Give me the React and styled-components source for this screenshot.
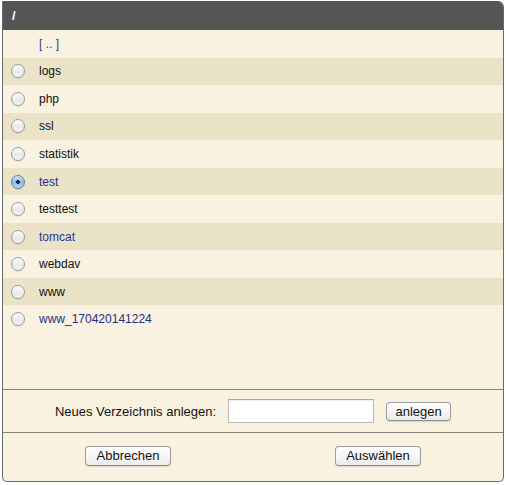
import React from "react";
import styled, { createGlobalStyle } from "styled-components";

const Global = createGlobalStyle`
  html, body { margin: 0; padding: 0; background: #ffffff; }
  body { font-family: "Liberation Sans", Arial, sans-serif; }
`;

const Page = styled.div`
  padding: 1px 0 0 2px;
`;

const Dialog = styled.div`
  box-sizing: border-box;
  width: 502px;
  height: 481px;
  display: flex;
  flex-direction: column;
  background: #f9f2e0;
  border: 1px solid #6a6a6a;
  border-top: none;
  border-radius: 1px 6px 5px 5px;
  overflow: hidden;
`;

const Header = styled.div`
  height: 29px;
  flex: none;
  background: #555555;
  color: #ffffff;
  font-weight: bold;
  font-size: 13px;
  display: flex;
  align-items: center;
  padding-left: 10px;
  margin: 0 -1px;
`;

const List = styled.div`
  flex: 1;
  display: flex;
  flex-direction: column;
`;

const Row = styled.div`
  height: 27.55px;
  flex: none;
  display: flex;
  align-items: center;
  background: ${(p) => (p.$odd ? "#ebe3c7" : "#f9f2e0")};
  font-size: 12px;
  color: ${(p) => p.$color || "#111111"};
`;

const RadioSlot = styled.div`
  width: 36px;
  flex: none;
  display: flex;
  align-items: center;
  padding-left: 8px;
  box-sizing: border-box;
`;

const Radio = styled.span`
  box-sizing: border-box;
  width: 14px;
  height: 14px;
  border-radius: 50%;
  border: 1px solid ${(p) => (p.$checked ? "#5e7fa8" : "#9b9b9b")};
  background: ${(p) =>
    p.$checked
      ? "radial-gradient(circle at 50% 50%, #1c2b3f 0, #1c2b3f 1.6px, transparent 2.2px), linear-gradient(#cfe3f7, #8fb9e6 55%, #b9d8f5)"
      : "linear-gradient(#fdfdfd, #e9e9e9 60%, #f4f4f4)"};
  box-shadow: 0 1px 1px rgba(0, 0, 0, 0.08);
`;

const Name = styled.span``;

const CreateBar = styled.div`
  flex: none;
  height: 43px;
  box-sizing: border-box;
  border-top: 1px solid #8a8478;
  display: flex;
  align-items: center;
  justify-content: center;
  gap: 12px;
`;

const Label = styled.span`
  font-size: 13px;
  color: #111111;
`;

const TextInput = styled.input`
  box-sizing: border-box;
  width: 146px;
  height: 24px;
  border: 1px solid #b9b9b9;
  border-top-color: #a8a8a8;
  background: #ffffff;
  box-shadow: inset 0 1px 1px rgba(0, 0, 0, 0.08);
  margin: 0;
  padding: 2px 4px;
  font-size: 13px;
  font-family: "Liberation Sans", Arial, sans-serif;
  outline: none;
`;

const Button = styled.button`
  box-sizing: border-box;
  height: ${(p) => p.$h}px;
  width: ${(p) => p.$w}px;
  padding: 0;
  margin: 0;
  border: 1px solid #9d9d9d;
  border-bottom-color: #8c8c8c;
  border-radius: 4px;
  background: linear-gradient(#ffffff, #f6f6f6 50%, #ececec);
  box-shadow: 0 1px 1px rgba(0, 0, 0, 0.12);
  font-size: 13px;
  font-family: "Liberation Sans", Arial, sans-serif;
  color: #111111;
  line-height: 1;
`;

const ActionBar = styled.div`
  flex: none;
  height: 49px;
  box-sizing: border-box;
  border-top: 1px solid #8a8478;
  display: grid;
  grid-template-columns: 1fr 1fr;
  align-items: center;
  padding-bottom: 3px;
`;

const Cell = styled.div`
  display: flex;
  justify-content: center;
`;

const entries = [
  { name: "[ .. ]", color: "#4a2c93", parent: true },
  { name: "logs" },
  { name: "php" },
  { name: "ssl" },
  { name: "statistik" },
  { name: "test", color: "#2b2b8e", checked: true },
  { name: "testtest" },
  { name: "tomcat", color: "#1f3a94" },
  { name: "webdav" },
  { name: "www" },
  { name: "www_170420141224", color: "#1b2f85" },
];

export default function App() {
  return (
    <>
      <Global />
      <Page>
        <Dialog>
          <Header>/</Header>
          <List>
            {entries.map((e, i) => (
              <Row key={e.name} $odd={i % 2 === 1} $color={e.color}>
                <RadioSlot>{!e.parent && <Radio $checked={e.checked} />}</RadioSlot>
                <Name>{e.name}</Name>
              </Row>
            ))}
          </List>
          <CreateBar>
            <Label>Neues Verzeichnis anlegen:</Label>
            <TextInput type="text" />
            <Button $w={65} $h={19}>anlegen</Button>
          </CreateBar>
          <ActionBar>
            <Cell>
              <Button $w={86} $h={20}>Abbrechen</Button>
            </Cell>
            <Cell>
              <Button $w={86} $h={20}>Auswählen</Button>
            </Cell>
          </ActionBar>
        </Dialog>
      </Page>
    </>
  );
}
